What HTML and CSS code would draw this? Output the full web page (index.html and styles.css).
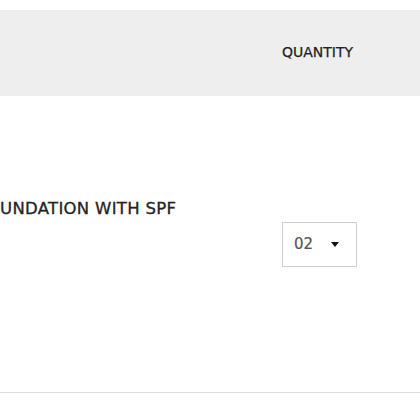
FILE: index.html
```html
<!DOCTYPE html>
<html>
<head>
<meta charset="utf-8">
<link rel="stylesheet" href="styles.css">
</head>
<body>
<div class="cart">
  <div class="cart-head">
    <div class="col-product"></div>
    <div class="col-qty">QUANTITY</div>
  </div>
  <div class="cart-row">
    <div class="col-product">
      <div class="product-name">UNDATION WITH SPF</div>
    </div>
    <div class="col-qty">
      <div class="qty-select">
        <span class="qty-value">02</span>
        <span class="caret"></span>
      </div>
    </div>
  </div>
</div>
</body>
</html>
```
FILE: styles.css
```css
html, body {
  margin: 0;
  padding: 0;
  background: #ffffff;
}
body {
  font-family: "DejaVu Sans", "Open Sans", sans-serif;
  color: #222;
}
.cart {
  padding-top: 10px;
}
.cart-head {
  display: grid;
  grid-template-columns: 282px 1fr;
  align-items: center;
  height: 86px;
  background: #eeeeee;
}
.cart-head .col-qty {
  font-size: 14px;
  line-height: 16px;
  margin-top: -3px;
  color: #222;
  -webkit-text-stroke: 0.25px #222;
}
.cart-row {
  display: grid;
  grid-template-columns: 282px 1fr;
  height: 296px;
  border-bottom: 1px solid #dedede;
}
.cart-row .col-product {
  padding-top: 104px;
}
.product-name {
  font-size: 16.5px;
  line-height: 18px;
  letter-spacing: 0.3px;
  color: #222;
  -webkit-text-stroke: 0.3px #222;
}
.cart-row .col-qty {
  display: flex;
  align-items: center;
}
.qty-select {
  box-sizing: border-box;
  width: 75px;
  height: 45px;
  border: 1px solid #cfcfcf;
  display: flex;
  align-items: center;
  padding-left: 11px;
}
.qty-value {
  font-size: 15px;
  color: #555;
  -webkit-text-stroke: 0.2px #555;
}
.caret {
  margin-left: 18px;
  width: 0;
  height: 0;
  border-left: 4px solid transparent;
  border-right: 4px solid transparent;
  border-top: 5px solid #111;
}
```
